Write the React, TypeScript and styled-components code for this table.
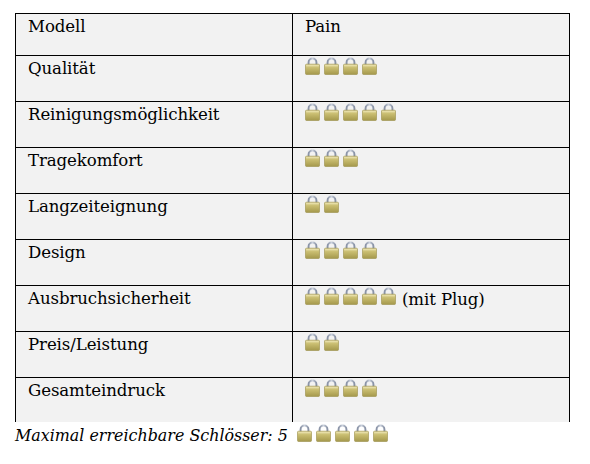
import React from 'react';
import styled, { createGlobalStyle } from 'styled-components';

const GlobalStyle = createGlobalStyle`
    html, body {
        margin: 0;
        padding: 0;
        background: #ffffff;
    }
`;

const StyledPage = styled.div`
    padding: 13px 0 0 15px;
    font-family: 'DejaVu Serif', 'Liberation Serif', serif;
    color: #000000;
`;

const StyledTable = styled.table`
    width: 555px;
    border-collapse: collapse;
    table-layout: fixed;
    background: #f2f2f2;
`;

const StyledRow = styled.tr<{ $height: number; $open?: boolean }>`
    height: ${(props) => props.$height}px;
    border-top: 1px solid #000000;
    border-bottom: ${(props) => (props.$open ? 'none' : '1px solid #000000')};
`;

const StyledCell = styled.td`
    border-left: 1px solid #000000;
    border-right: 1px solid #000000;
    padding: 1px 12px 0 12px;
    vertical-align: top;
    font-size: 16.6px;
    line-height: 24px;
    letter-spacing: -0.1px;
    white-space: nowrap;
`;

const StyledLockRow = styled.div`
    display: flex;
    align-items: flex-start;
    gap: 4px;
    height: 24px;
`;

const StyledNote = styled.span`
    margin-left: 2px;
    line-height: 24px;
    margin-top: 1px;
`;

const StyledFooter = styled.div`
    display: flex;
    align-items: center;
    gap: 9px;
    font-style: italic;
    font-size: 15.9px;
    line-height: 24px;
    margin-top: 2px;
`;

function Lock(): JSX.Element {
    return (
        <svg width="15" height="18" viewBox="0 0 15 18">
            <defs>
                <linearGradient id="lockBody" x1="0" y1="0" x2="0" y2="1">
                    <stop offset="0" stopColor="#e0d79a" />
                    <stop offset="0.35" stopColor="#c9bd70" />
                    <stop offset="1" stopColor="#a4984c" />
                </linearGradient>
                <linearGradient id="lockShackle" x1="0" y1="0" x2="1" y2="0">
                    <stop offset="0" stopColor="#8a93a6" />
                    <stop offset="0.5" stopColor="#c9d0dc" />
                    <stop offset="1" stopColor="#8a93a6" />
                </linearGradient>
            </defs>
            <path
                d="M3.6 8 V5.4 A3.9 3.9 0 0 1 11.4 5.4 V8"
                fill="none"
                stroke="url(#lockShackle)"
                strokeWidth="2"
            />
            <rect x="0.5" y="7.2" width="14" height="10.3" rx="1" fill="url(#lockBody)" stroke="#9a8f48" strokeWidth="0.6" />
            <rect x="1.2" y="7.9" width="12.6" height="1.4" fill="#ece4b0" opacity="0.7" />
        </svg>
    );
}

function Locks({ count }: { count: number }): JSX.Element {
    return (
        <>
            {Array.from({ length: count }).map((_, i) => (
                <Lock key={i} />
            ))}
        </>
    );
}

const rows: { label: string; locks: number; note?: string }[] = [
    { label: 'Qualität', locks: 4 },
    { label: 'Reinigungsmöglichkeit', locks: 5 },
    { label: 'Tragekomfort', locks: 3 },
    { label: 'Langzeiteignung', locks: 2 },
    { label: 'Design', locks: 4 },
    { label: 'Ausbruchsicherheit', locks: 5, note: '(mit Plug)' },
    { label: 'Preis/Leistung', locks: 2 },
    { label: 'Gesamteindruck', locks: 4 },
];

export default function App(): JSX.Element {
    return (
        <>
            <GlobalStyle />
            <StyledPage>
                <StyledTable>
                    <tbody>
                        <StyledRow $height={42}>
                            <StyledCell>Modell</StyledCell>
                            <StyledCell>Pain</StyledCell>
                        </StyledRow>
                        {rows.map((row, i) => (
                            <StyledRow key={row.label} $height={i === rows.length - 1 ? 44 : 46} $open={i === rows.length - 1}>
                                <StyledCell>{row.label}</StyledCell>
                                <StyledCell>
                                    <StyledLockRow>
                                        <Locks count={row.locks} />
                                        {row.note && <StyledNote>{row.note}</StyledNote>}
                                    </StyledLockRow>
                                </StyledCell>
                            </StyledRow>
                        ))}
                    </tbody>
                </StyledTable>
                <StyledFooter>
                    <span>Maximal erreichbare Schlösser: 5</span>
                    <StyledLockRow>
                        <Locks count={5} />
                    </StyledLockRow>
                </StyledFooter>
            </StyledPage>
        </>
    );
}
